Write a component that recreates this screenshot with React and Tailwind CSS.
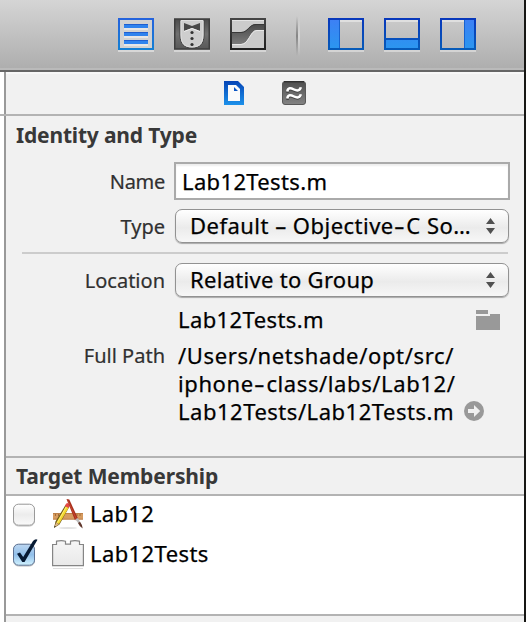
import React from "react";

const value = "whitespace-nowrap text-[22px] leading-[28px] text-black [-webkit-text-stroke:0.25px_black]";
const label = "relative top-px w-[166px] shrink-0 text-right text-[20px] leading-[28px] text-[#303030] [-webkit-text-stroke:0.2px_#303030]";

function ListIcon() {
  return (
    <svg width="36" height="34" viewBox="0 0 36 34" shapeRendering="crispEdges">
      <defs>
        <linearGradient id="listEdge" x1="0" y1="0" x2="0" y2="1">
          <stop offset="0" stopColor="#2463dc" />
          <stop offset="1" stopColor="#147fd3" />
        </linearGradient>
      </defs>
      <rect y="32" width="36" height="2" fill="#d8d8d8" />
      <rect x="1" y="1" width="34" height="30" fill="#d2d2d2" stroke="url(#listEdge)" strokeWidth="2" />
      {[6, 14, 22].map((y) => (
        <g key={y}>
          <rect x="6" y={y} width="24" height="4" fill="#2f83ee" />
          <rect x="6" y={y} width="24" height="1" fill="#1f5fd0" />
          <rect x="6" y={y + 4} width="24" height="2" fill="#e6e6e6" />
        </g>
      ))}
    </svg>
  );
}

function TuxedoIcon() {
  return (
    <svg width="36" height="34" viewBox="0 0 36 34">
      <defs>
        <linearGradient id="tux" x1="0" y1="0" x2="0" y2="1">
          <stop offset="0" stopColor="#4c4c4c" />
          <stop offset="0.5" stopColor="#707070" />
          <stop offset="1" stopColor="#585858" />
        </linearGradient>
      </defs>
      <rect y="32" width="36" height="2" fill="#d5d5d5" />
      <rect x="0.75" y="1" width="34.5" height="30" fill="url(#tux)" stroke="#3e3e3e" strokeWidth="1.5" />
      <path d="M6 2H30V17C30 26 26 30 18 30S6 26 6 17Z" fill="#cecece" stroke="#424242" strokeWidth="1" />
      <path d="M7 2.5V17C7 25.5 10.5 29 18 29S29 25.5 29 17V2.5Z" fill="none" stroke="#e0e0e0" strokeWidth="1" />
      <path d="M10 5L18 8L26 5V13L18 10L10 13Z" fill="#484848" />
      <path d="M10 13.5L18 10.5L26 13.5" fill="none" stroke="#eeeeee" />
      <circle cx="18" cy="14.5" r="1.6" fill="#333" />
      <circle cx="18" cy="20.5" r="1.6" fill="#333" />
      <circle cx="18" cy="26.5" r="1.6" fill="#333" />
    </svg>
  );
}

function CurveIcon() {
  return (
    <svg width="36" height="34" viewBox="0 0 36 34">
      <defs>
        <linearGradient id="curve" x1="0" y1="0" x2="0" y2="1">
          <stop offset="0" stopColor="#484848" />
          <stop offset="1" stopColor="#7b7b7b" />
        </linearGradient>
        <linearGradient id="curveEdge" x1="0" y1="0" x2="0" y2="1">
          <stop offset="0" stopColor="#454545" />
          <stop offset="1" stopColor="#202020" />
        </linearGradient>
      </defs>
      <rect y="32" width="36" height="2" fill="#d5d5d5" />
      <rect width="36" height="32" fill="url(#curveEdge)" />
      <rect x="2" y="2" width="32" height="28" fill="#cbcbcb" />
      <path d="M2 2.5H34" stroke="#e4e4e4" />
      <path d="M2 14H11C18 14 19 6 26 6H34V12H27C20 12 19 26 11 26H2Z" fill="url(#curve)" />
      <path d="M2 14.5H11C18 14.5 19 6.5 26 6.5H34" fill="none" stroke="#383838" />
      <path d="M2 26.5H11C19 26.5 20 12.5 27 12.5H34" fill="none" stroke="#e9e9e9" />
    </svg>
  );
}

function PanelIcon({ side }) {
  const fill = {
    left: { x: 2, y: 2, width: 9, height: 28 },
    bottom: { x: 2, y: 22, width: 32, height: 8 },
    right: { x: 25, y: 2, width: 9, height: 28 },
  }[side];
  const edge = {
    left: "M11.5 2V30",
    bottom: "M2 21H34",
    right: "M24.5 2V30",
  }[side];
  const id = "panel-" + side;
  return (
    <svg width="36" height="34" viewBox="0 0 36 34" shapeRendering="crispEdges">
      <defs>
        <linearGradient id={id} gradientUnits="userSpaceOnUse" x1="0" y1="0" x2="0" y2="32">
          <stop offset="0" stopColor="#3e7ff5" />
          <stop offset="1" stopColor="#2a97ef" />
        </linearGradient>
        <linearGradient id={id + "-edge"} gradientUnits="userSpaceOnUse" x1="0" y1="0" x2="0" y2="32">
          <stop offset="0" stopColor="#0837bb" />
          <stop offset="1" stopColor="#065bb8" />
        </linearGradient>
      </defs>
      <rect y="32" width="36" height="2" fill="#d4d4d4" />
      <rect x="2" y="2" width="32" height="2" fill="#dfdfdf" />
      <rect {...fill} fill={`url(#${id})`} />
      <path d={edge} stroke={side === "bottom" ? "#0750bd" : "#1763cf"} strokeWidth={side === "bottom" ? 2 : 1} />
      <rect x="1" y="1" width="34" height="30" fill="none" stroke={`url(#${id}-edge)`} strokeWidth="2" />
    </svg>
  );
}

function FileIcon() {
  return (
    <svg width="20" height="24" viewBox="0 0 20 24">
      <defs>
        <linearGradient id="file" x1="0" y1="0" x2="0" y2="1">
          <stop offset="0" stopColor="#0645b6" />
          <stop offset="1" stopColor="#1c91ea" />
        </linearGradient>
      </defs>
      <path d="M0 0H14L20 6V24H0Z" fill="url(#file)" />
      <path d="M4 4H10V10H16V20H4Z" fill="#fafafa" />
      <path d="M10 4H12L16 8V10H10Z" fill="#fafafa" />
      <path d="M10 6L14 10H10Z" fill="#0a55c4" />
    </svg>
  );
}

function HelpIcon() {
  return (
    <svg width="24" height="24" viewBox="0 0 24 24">
      <defs>
        <linearGradient id="help" x1="0" y1="0" x2="0" y2="1">
          <stop offset="0" stopColor="#4e4e4e" />
          <stop offset="1" stopColor="#838383" />
        </linearGradient>
      </defs>
      <rect x="0.5" y="0.5" width="23" height="23" rx="2.5" fill="url(#help)" stroke="#585858" />
      <path d="M2 0.7H22" stroke="#303030" strokeWidth="1.4" />
      <g fill="none" strokeLinecap="butt">
        <path d="M5.5 12C6 7 9 8 12 9.5S18 11 18.8 7.5M5.5 19C6 14 9 15 12 16.5S18 18 18.8 14.5" stroke="#454545" strokeWidth="2.5" />
        <path d="M5.3 10.5C6 6 9 7 12 8.5S18 10 18.8 6.2M5.3 17.5C6 13 9 14 12 15.5S18 17 18.8 13.2" stroke="#fff" strokeWidth="2.5" />
      </g>
    </svg>
  );
}

function AppIcon() {
  return (
    <svg width="32" height="32" viewBox="0 0 32 32">
      <ellipse cx="16" cy="30" rx="9" ry="1" fill="#e3e3e3" />
      <rect x="1" y="15" width="30" height="6.5" fill="#d69b60" />
      <path d="M1 15.5H31M1 21.2H31" stroke="#b67a45" strokeWidth="0.8" />
      <path d="M3.5 16V18M6.5 16V18M9.5 16V18M22 16V18M25 16V18M28 16V18" stroke="#93602f" strokeWidth="0.8" />
      <path d="M13.8 6.5L17.5 8.5L7.5 26.5L2 30L3.5 23.5Z" fill="#705b1d" />
      <path d="M14 8L16.8 9.5L7 26L4.4 24.5Z" fill="#f4d72e" />
      <path d="M14.5 8.3L5.3 24.8" stroke="#fff27c" strokeWidth="0.9" />
      <path d="M12.8 8L15 4.8L18 6.8L16.4 10Z" fill="#e74948" />
      <path d="M4.2 24.5L6.9 26.2L2.2 29.5Z" fill="#dfb782" />
      <path d="M2 29.8L2.6 27.7L4 28.5Z" fill="#333" />
      <path d="M14.5 1L17.3 1.5L26.2 21L23 22.2Z" fill="#a82f1d" />
      <path d="M16 3L24.4 21" stroke="#d9573c" strokeWidth="0.6" />
      <path d="M23.2 21.3L26 20L28.2 24.3L26.5 25.5Z" fill="#bcbcbc" />
      <path d="M26 25L28 23.8Q30.5 27 30.7 30.5Q27 28 26 25Z" fill="#60382d" />
    </svg>
  );
}

function BrickIcon() {
  return (
    <svg width="32" height="32" viewBox="0 0 32 32">
      <defs>
        <linearGradient id="brick" x1="0" y1="0" x2="0" y2="1">
          <stop offset="0" stopColor="#f6f6f6" />
          <stop offset="1" stopColor="#e9e9e9" />
        </linearGradient>
      </defs>
      <path d="M0.6 4.5H4.5V1.2Q9.5 0 13.5 1.2V4.2H18.5V1.2Q23 0 27.5 1.2V4.5H31.4V25.6H0.6Z" fill="url(#brick)" stroke="#858585" strokeWidth="1.2" />
      <path d="M1 28.5H31" stroke="#dedede" />
    </svg>
  );
}

function FolderIcon() {
  return (
    <svg width="24" height="20" viewBox="0 0 24 20" fill="#999" shapeRendering="crispEdges">
      <path d="M0 0H12V4H0ZM0 6H14V4H24V20H0Z" />
    </svg>
  );
}

function ArrowIcon() {
  return (
    <svg width="20" height="20" viewBox="0 0 20 20">
      <circle cx="10" cy="10" r="10" fill="#999" />
      <path d="M4 8H10V4L16.2 10L10 16V12H4Z" fill="#f1f1f1" />
    </svg>
  );
}

function Hyphen() {
  return <span className="mx-[2.5px] inline-block scale-x-150">-</span>;
}

function Popup({ children, tracking }) {
  return (
    <div className="flex h-[34px] w-[334px] items-center justify-between rounded-[7px] border border-[#929292] bg-linear-to-b from-white from-0% via-[#ebebeb] via-55% to-[#f7f7f7] pr-[13px] pl-[14px] shadow-[0_1px_1px_rgba(0,0,0,0.3)]">
      <span className={"-mt-[2px] " + value + " " + tracking}>{children}</span>
      <svg width="9" height="16" viewBox="0 0 9 16" fill="#505050">
        <path d="M0 6L4.5 0L9 6ZM0 10H9L4.5 16Z" />
      </svg>
    </div>
  );
}

function Checkbox({ checked }) {
  return (
    <svg className="shrink-0 overflow-visible" width="24" height="24" viewBox="0 0 24 24">
      <defs>
        <linearGradient id={checked ? "boxOn" : "boxOff"} x1="0" y1="0" x2="0" y2="1">
          <stop offset="0" stopColor={checked ? "#bdd7f1" : "#ffffff"} />
          <stop offset="0.5" stopColor={checked ? "#91bfea" : "#ececec"} />
          <stop offset="1" stopColor={checked ? "#d2f3ff" : "#fafafa"} />
        </linearGradient>
      </defs>
      <rect x="1.5" y="2" width="21" height="21" rx="5" fill="none" stroke="#bbb" />
      <rect x="1.5" y="1.2" width="21" height="21" rx="5" fill={checked ? "url(#boxOn)" : "url(#boxOff)"} stroke={checked ? "#5b7092" : "#999"} />
      {checked && <path d="M5 10.8L8 9.5L11.2 14L21 -2Q23.5 -4.8 25.5 -3.3L12.5 19H10.3Z" fill="#071a33" />}
    </svg>
  );
}

export default function App() {
  return (
    <div className="flex h-[622px] w-[526px] overflow-hidden bg-[#171714] font-['Noto_Sans','Open_Sans',sans-serif]">
      <div className="flex w-[524px] flex-col bg-white">
        <header className="flex h-[72px] shrink-0 items-start border-b-2 border-[#666] bg-linear-to-b from-[#d5d5d5] to-[#adadad] pt-[18px] pl-[118px] shadow-[inset_0_-2px_0_#bababa]">
          <div className="flex gap-5">
            <ListIcon />
            <TuxedoIcon />
            <CurveIcon />
          </div>
          <div className="-mt-[2px] ml-[30px] flex h-10">
            <div className="w-[2px] bg-linear-to-b from-transparent via-[#858585] to-transparent" />
            <div className="w-[2px] bg-linear-to-b from-transparent via-[#d6d6d6] to-transparent" />
          </div>
          <div className="ml-[28px] flex gap-5">
            <PanelIcon side="left" />
            <PanelIcon side="bottom" />
            <PanelIcon side="right" />
          </div>
        </header>

        <div className="flex h-[44px] shrink-0 border-b-2 border-[#b3b3b3] pl-1">
          <div className="flex flex-1 border-l-2 border-[#999]">
            <div className="flex flex-1 items-start gap-[38px] border-t-2 border-[#f8f8f8] bg-[#f1f1f1] pt-[7px] pl-[218px]">
              <FileIcon />
              <HelpIcon />
            </div>
          </div>
        </div>

        <main className="ml-1 flex flex-1 flex-col border-l-2 border-[#999]">
          <section className="h-[340px] shrink-0 bg-[#f1f1f1]">
            <h2 className="h-[46px] pt-[5px] pl-[10px] text-[21px] leading-[28px] font-bold tracking-[-0.18px] whitespace-nowrap text-[#383838]">Identity and Type</h2>
            <div className="flex h-[38px] items-center">
              <span className={label + " pr-[7px] tracking-[-0.3px]"}>Name</span>
              <div className="ml-[2px] flex h-[38px] w-[336px] items-center border-2 border-[#aaa] bg-white pl-[6px] shadow-[inset_0_2px_2px_#eee]">
                <span className={value + " tracking-[0.35px]"}>Lab12Tests.m</span>
              </div>
            </div>
            <div className="mt-[9px] flex items-center">
              <span className={label + " pr-[7px]"}>Type</span>
              <div className="ml-[3px]">
                <Popup tracking="tracking-[0.48px]">Default – Objective<Hyphen />C So…</Popup>
              </div>
            </div>
            <div className="mt-[9px] ml-4 h-[2px] w-[486px] bg-[#ccc]" />
            <div className="mt-[9px] flex items-center">
              <span className={label + " pr-[7px]"}>Location</span>
              <div className="ml-[3px]">
                <Popup tracking="tracking-[0.3px]">Relative to Group</Popup>
              </div>
            </div>
            <div className="mt-[8px] flex h-[28px] items-center justify-between pr-6 pl-[172px]">
              <span className={value + " tracking-[0.4px]"}>Lab12Tests.m</span>
              <div className="mt-[2px]"><FolderIcon /></div>
            </div>
            <div className="mt-[8px] flex items-start">
              <span className={label + " pr-[7px]"}>Full Path</span>
              <div className={"ml-[6px] " + value}>
                <div className="tracking-[0.65px]">/Users/netshade/opt/src/</div>
                <div className="tracking-[0.6px]">iphone<Hyphen />class/labs/Lab12/</div>
                <div className="flex items-center gap-[10px]">
                  <span className="tracking-[0.52px]">Lab12Tests/Lab12Tests.m</span>
                  <ArrowIcon />
                </div>
              </div>
            </div>
          </section>
          <section className="h-[40px] shrink-0 border-y-2 border-[#b3b3b3] bg-[#f1f1f1]">
            <h2 className="pt-[4px] pl-[10px] text-[21px] leading-[28px] font-bold tracking-[-0.13px] whitespace-nowrap text-[#383838]">Target Membership</h2>
          </section>
          <section className="h-[118px] shrink-0 bg-white pt-[2px] pl-[6px]">
            <div className="flex h-10 items-start">
              <div className="pt-[5px]"><Checkbox /></div>
              <div className="pl-4"><AppIcon /></div>
              <span className={"pt-[1px] pl-[6px] tracking-[0.3px] " + value}>Lab12</span>
            </div>
            <div className="flex h-10 items-start">
              <div className="pt-[5px]"><Checkbox checked /></div>
              <div className="pt-[2px] pl-4"><BrickIcon /></div>
              <span className={"pt-[1px] pl-[6px] tracking-[0.4px] " + value}>Lab12Tests</span>
            </div>
          </section>
          <div className="flex-1 border-t-2 border-[#b3b3b3] bg-[#f1f1f1]" />
        </main>
      </div>
    </div>
  );
}
